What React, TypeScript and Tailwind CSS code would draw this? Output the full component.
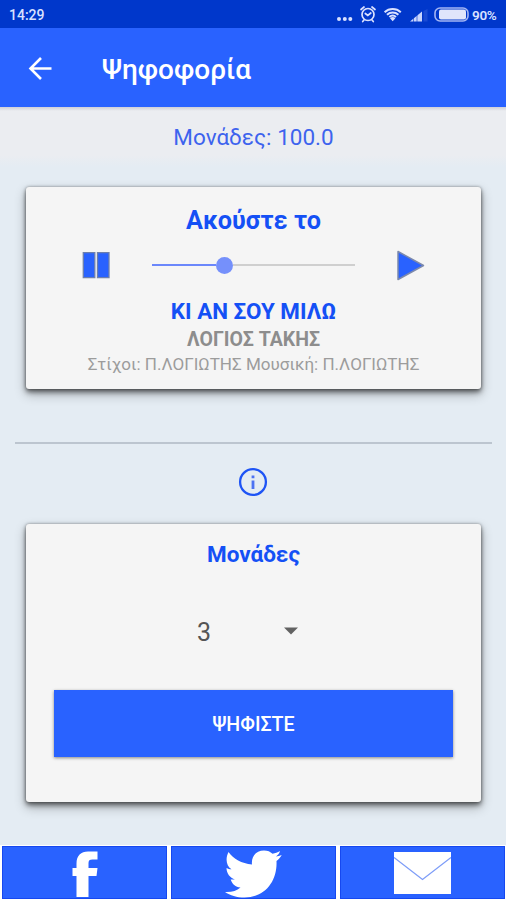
import type { ReactNode } from "react";

function StatusBar() {
  return (
    <div className="flex h-[28px] shrink-0 items-center bg-[#0037cb] pl-[9px] pr-[8px] text-[#d9e1ff]">
      <span className="w-[60px] pt-[2px] text-[14px] font-medium leading-[28px]">14:29</span>
      <svg className="ml-auto shrink-0" width="132" height="28" viewBox="338 0 132 28" fill="none">
        <g fill="#d9e1ff">
          <circle cx="340" cy="19" r="2" />
          <circle cx="345.800" cy="19" r="2" />
          <circle cx="351.300" cy="19" r="2" />
        </g>
        <g stroke="#d9e1ff" strokeWidth="1.700" strokeLinecap="round">
          <circle cx="369" cy="14.500" r="6" />
          <path d="M362 9.500l3-2.500M376 9.500l-3-2.500M366.300 13.500l2.500 2 3-2.500M365 20l-1.300 1.500M373 20l1.300 1.500" />
        </g>
        <g stroke="#d9e1ff" strokeWidth="2">
          <path d="M385.600 12.200a12 12 0 0 1 16.200 0M388 14.700a8.400 8.400 0 0 1 11.400 0M390.400 17a5 5 0 0 1 6.600 0" />
        </g>
        <path d="M391 18.200a4 4 0 0 1 5.400 0l-2.700 3z" fill="#d9e1ff" />
        <path d="M411 21.500l12-10v10z" fill="#c9d5fc" />
        <path d="M414.500 18v4M418 15v7" stroke="#0037cb" strokeWidth=".6" />
        <path d="M424.500 11l4-2v12.500h-4z" fill="#1a4bd3" />
        <rect x="436" y="8" width="33" height="13" rx="5" stroke="#a3b5f3" strokeWidth="1.600" />
        <rect x="440" y="9.500" width="27" height="10" rx="2" fill="#e0e5fb" />
      </svg>
      <span className="w-[29px] whitespace-nowrap pl-[3px] pt-[2px] text-[13.500px] font-semibold leading-[28px] tracking-[-0.3px]">
        90%
      </span>
    </div>
  );
}

function Card({ className, children }: { className: string; children: ReactNode }) {
  return (
    <section
      className={
        "ml-[26px] mr-[25px] flex shrink-0 flex-col items-center rounded-[3px] bg-[#f5f5f5] shadow-[0_0_3px_rgba(0,0,0,0.35),0_3px_5px_rgba(0,0,0,0.5),0_5px_12px_rgba(0,0,0,0.3)] " +
        className
      }
    >
      {children}
    </section>
  );
}

function PlayerCard() {
  return (
    <Card className="h-[202px] pt-[17px]">
      <h2 className="text-[25.200px] font-bold leading-[34px] text-[#1450f5]">Ακούστε το</h2>
      <div className="flex h-[54px] w-full items-center px-[56px]">
        <svg width="30" height="30" viewBox="0 0 30 30" fill="#2962ff" stroke="#6c7fae" strokeWidth="1.300">
          <path d="M1.300 2.700h11.500v25H1.300zM15.500 2.700H27v25H15.500z" />
        </svg>
        <div className="ml-[40px] flex h-[17px] w-[203px] items-center">
          <div className="h-[2px] w-[64px] bg-[#6b87fb]" />
          <div className="h-[17px] w-[17px] rounded-full bg-[#7590fb]" />
          <div className="h-[2px] flex-1 bg-[#cfcfcf]" />
        </div>
        <svg className="ml-auto" width="30" height="32" viewBox="0 0 30 32">
          <path d="M3 2.500v28L28.500 16.500z" fill="#2962ff" stroke="#7c89ac" strokeWidth="1.500" strokeLinejoin="round" />
        </svg>
      </div>
      <p className="pt-[5px] text-[22.400px] font-bold leading-[29px] text-[#1450f5]">ΚΙ ΑΝ ΣΟΥ ΜΙΛΩ</p>
      <p className="pt-[1px] text-[19.500px] font-bold leading-[26px] text-[#8d8d8d]">ΛΟΓΙΟΣ ΤΑΚΗΣ</p>
      <p className="whitespace-nowrap text-[17.050px] leading-[23px] text-[#9c9c9c]">Στίχοι: Π.ΛΟΓΙΩΤΗΣ Μουσική: Π.ΛΟΓΙΩΤΗΣ</p>
    </Card>
  );
}

function VoteCard() {
  return (
    <Card className="h-[278px] pt-[14px]">
      <h2 className="text-[22.500px] font-bold leading-[32px] text-[#1450f5]">Μονάδες</h2>
      <div className="mt-[43px] flex h-[36px] w-full items-center pl-[171px] text-[#555]">
        <span className="w-[87px] pt-[3px] text-[25px] leading-[36px]">3</span>
        <svg width="14" height="8" viewBox="0 0 14 8">
          <path d="M0 .5h14L7 7.500z" fill="#626262" />
        </svg>
      </div>
      <button className="mt-[41px] h-[67px] w-[399px] bg-[#2962ff] pt-[3px] text-[19.600px] font-medium text-white shadow-[0_1px_3px_rgba(0,0,0,0.45)]">
        ΨΗΦΙΣΤΕ
      </button>
    </Card>
  );
}

function ShareBar() {
  return (
    <footer className="grid h-[55px] shrink-0 grid-cols-[165px_165px_165px] grid-rows-[53px] gap-[4px] bg-white px-[2px] pt-[1px]">
      <a className="flex items-center justify-center border border-[#1648f0] bg-[#2962ff]">
        <svg className="mt-[2px]" width="26" height="46" viewBox="0 0 26 46" fill="#fff">
          <path d="M4.500 46V25H.5v-8h4v-4.500C4.500 4.500 9 .500 16 .500h9.500v8h-5c-3 0-4 1-4 3.500v5h9L24.500 25h-8v21z" />
        </svg>
      </a>
      <a className="flex items-center justify-center border border-[#1648f0] bg-[#2962ff]">
        <svg className="mt-[2px]" width="57" height="48" viewBox="0 0 57 48" fill="#fff">
          <path d="M3.500 2c5 7 13 11.500 23.500 12.500C26 6 31.500.5 39 .500c3.500 0 6.500 1.200 8.500 3.300 2.800-.5 5-1.300 7.500-2.800-.7 2.500-2 4-4 5.500 2-.2 3.700-.7 5.700-1.500-1.300 2.500-3 4.300-5.200 6C52.500 31 40 47.500 19.500 47.500 12 47.500 5 45.500 0 42c7 .3 11.500-1.200 15.500-4.500-5-.5-8.500-3.500-9.800-8h4.300c-5-1.800-8.500-6-8.500-11.500 1.500.9 3 1.300 5 1.300C1 15.500.3 8.500 3.500 2z" />
        </svg>
      </a>
      <a className="flex items-center justify-center border border-[#1648f0] bg-[#2962ff]">
        <svg width="57" height="42" viewBox="0 0 57 42">
          <path d="M0 0h57v42H0z" fill="#fff" />
          <path d="M0 5.500L28.500 27.500 57 5.500" fill="none" stroke="#7e9df8" strokeWidth="1.300" />
        </svg>
      </a>
    </footer>
  );
}

export default function App() {
  return (
    <div className="flex h-[900px] w-[506px] flex-col overflow-hidden bg-[#e4ecf3] font-[Roboto,sans-serif]">
      <StatusBar />
      <header className="flex h-[79px] shrink-0 items-center bg-[#2962ff] pl-[28px] text-white">
        <svg width="24" height="24" viewBox="0 0 24 24" fill="none" stroke="#fff" strokeWidth="2.600">
          <path d="M23.500 12.500H3M13 2L2.500 12.500 13 23" />
        </svg>
        <h1 className="ml-[50px] pt-[4px] text-[28px] font-medium leading-[36px]">Ψηφοφορία</h1>
      </header>
      <div className="flex h-[60px] shrink-0 justify-center bg-[linear-gradient(#cfcfd8_0,#ebedf1_4px,#ebedf1_48px,#e4ecf3_60px)] pt-[14px]">
        <p className="pl-[1px] text-[22.500px] leading-[32px] text-[#3d63ee]">Μονάδες: 100.0</p>
      </div>
      <div className="h-[20px] shrink-0" />
      <PlayerCard />
      <hr className="ml-[15px] mr-[14px] mt-[53px] h-[2px] shrink-0 border-0 bg-[#bcc5cf]" />
      <div className="flex h-[80px] shrink-0 justify-center pt-[23px]">
        <svg width="30" height="30" viewBox="0 0 30 30" fill="none">
          <circle cx="15" cy="15" r="12.900" stroke="#1e54f5" strokeWidth="2.300" />
          <path d="M15 13.500v8.500M15 8.500v2.700" stroke="#4c72f2" strokeWidth="2.800" />
        </svg>
      </div>
      <VoteCard />
      <div className="flex-1" />
      <ShareBar />
    </div>
  );
}
